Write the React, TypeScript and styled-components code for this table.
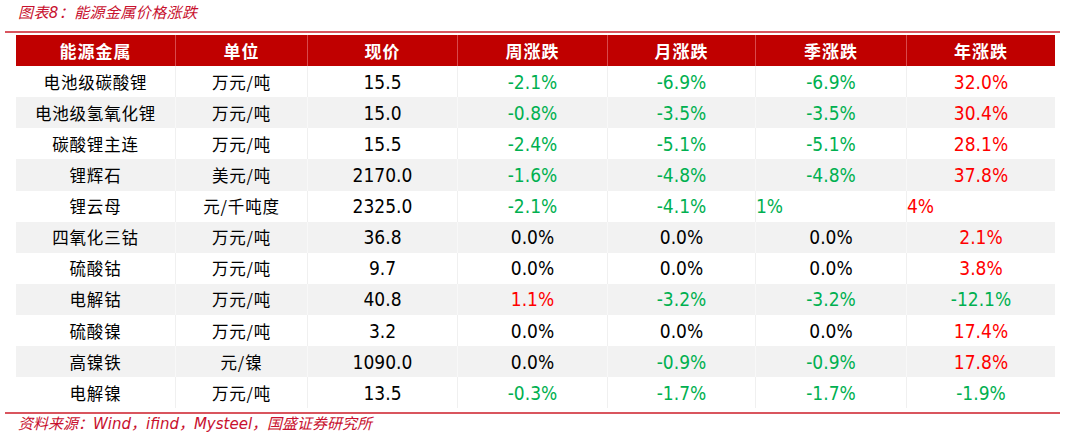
import React from "react";
import styled, { createGlobalStyle } from "styled-components";

const Global = createGlobalStyle`
  html, body { margin: 0; padding: 0; background: #ffffff; }
  body { font-family: "Noto Sans CJK SC", sans-serif; }
`;

const Page = styled.div`
  width: 1065px;
  height: 438px;
  padding: 0 5px;
  box-sizing: border-box;
  background: #fff;
`;

const Title = styled.div`
  height: 31px;
  padding-left: 13px;
  line-height: 27px;
  font-size: 15px;
  font-style: italic;
  color: #c8102e;
  font-family: "DejaVu Sans", "Noto Sans CJK SC", sans-serif;
  letter-spacing: 0.4px;
`;

const Rule = styled.div<{ $gap: number }>`
  height: 2px;
  width: 1055px;
  background: #d9555e;
  margin-bottom: ${(p) => p.$gap}px;
`;

const Table = styled.div`
  margin: 0 0 3.5px 11px;
  width: 1039px;
  display: grid;
  grid-template-columns: 159px 132px 150px 150px 148px 151px 149px;
`;

const HeadCell = styled.div<{ $first?: boolean }>`
  height: 31px;
  background: #c00000;
  color: #ffffff;
  font-weight: 700;
  font-size: 17px;
  display: flex;
  align-items: center;
  justify-content: center;
  box-sizing: border-box;
  border-left: ${(p) => (p.$first ? "none" : "1px solid #d8494c")};
  letter-spacing: 1px;
`;

type Tone = "up" | "down" | "flat";

const Cell = styled.div<{
  $alt: boolean;
  $first?: boolean;
  $tone?: Tone;
  $num?: boolean;
  $left?: boolean;
}>`
  height: 31.13px;
  background: ${(p) => (p.$alt ? "#f2f2f2" : "#ffffff")};
  box-sizing: border-box;
  border-left: ${(p) =>
    p.$first ? "none" : p.$alt ? "1px solid #f8f8f8" : "1px solid #f0f0f0"};
  display: flex;
  align-items: center;
  justify-content: ${(p) => (p.$left ? "flex-start" : "center")};
  color: ${(p) =>
    p.$tone === "up" ? "#ff0000" : p.$tone === "down" ? "#00b050" : "#000000"};
  font-family: ${(p) =>
    p.$num
      ? `"DejaVu Sans Condensed", "DejaVu Sans", sans-serif`
      : `"Noto Sans CJK SC", sans-serif`};
  font-stretch: ${(p) => (p.$num ? "condensed" : "normal")};
  font-size: ${(p) => (p.$num ? "19px" : "16.5px")};
  white-space: nowrap;
  overflow: hidden;
  letter-spacing: ${(p) => (p.$num ? "0" : "0.8px")};
`;

const Source = styled.div`
  height: 20px;
  line-height: 20px;
  padding-left: 13px;
  font-size: 15px;
  font-style: italic;
  color: #c8102e;
  font-family: "DejaVu Sans", "Noto Sans CJK SC", sans-serif;
`;

type Row = {
  name: string;
  unit: string;
  price: string;
  vals: string[];
  tones?: Tone[];
  left?: boolean[];
};

const rows: Row[] = [
  { name: "电池级碳酸锂", unit: "万元/吨", price: "15.5", vals: ["-2.1%", "-6.9%", "-6.9%", "32.0%"] },
  { name: "电池级氢氧化锂", unit: "万元/吨", price: "15.0", vals: ["-0.8%", "-3.5%", "-3.5%", "30.4%"] },
  { name: "碳酸锂主连", unit: "万元/吨", price: "15.5", vals: ["-2.4%", "-5.1%", "-5.1%", "28.1%"] },
  { name: "锂辉石", unit: "美元/吨", price: "2170.0", vals: ["-1.6%", "-4.8%", "-4.8%", "37.8%"] },
  {
    name: "锂云母",
    unit: "元/千吨度",
    price: "2325.0",
    vals: ["-2.1%", "-4.1%", "1%", "4%"],
    tones: ["down", "down", "down", "up"],
    left: [false, false, true, true],
  },
  { name: "四氧化三钴", unit: "万元/吨", price: "36.8", vals: ["0.0%", "0.0%", "0.0%", "2.1%"] },
  { name: "硫酸钴", unit: "万元/吨", price: "9.7", vals: ["0.0%", "0.0%", "0.0%", "3.8%"] },
  { name: "电解钴", unit: "万元/吨", price: "40.8", vals: ["1.1%", "-3.2%", "-3.2%", "-12.1%"] },
  { name: "硫酸镍", unit: "万元/吨", price: "3.2", vals: ["0.0%", "0.0%", "0.0%", "17.4%"] },
  { name: "高镍铁", unit: "元/镍", price: "1090.0", vals: ["0.0%", "-0.9%", "-0.9%", "17.8%"] },
  { name: "电解镍", unit: "万元/吨", price: "13.5", vals: ["-0.3%", "-1.7%", "-1.7%", "-1.9%"] },
];

const headers = ["能源金属", "单位", "现价", "周涨跌", "月涨跌", "季涨跌", "年涨跌"];

const toneOf = (v: string): Tone => {
  if (v.startsWith("-")) return "down";
  if (/^0\.0+%$/.test(v)) return "flat";
  return "up";
};

export default function App() {
  return (
    <>
      <Global />
      <Page>
        <Title>图表8：能源金属价格涨跌</Title>
        <Rule $gap={2} />
        <Table>
          {headers.map((h, i) => (
            <HeadCell key={h} $first={i === 0}>
              {h}
            </HeadCell>
          ))}
          {rows.map((r, ri) => {
            const alt = ri % 2 === 1;
            return (
              <React.Fragment key={r.name}>
                <Cell $alt={alt} $first>
                  {r.name}
                </Cell>
                <Cell $alt={alt}>{r.unit}</Cell>
                <Cell $alt={alt} $num>
                  {r.price}
                </Cell>
                {r.vals.map((v, vi) => (
                  <Cell
                    key={vi}
                    $alt={alt}
                    $num
                    $tone={r.tones?.[vi] ?? toneOf(v)}
                    $left={r.left?.[vi]}
                  >
                    {v}
                  </Cell>
                ))}
              </React.Fragment>
            );
          })}
        </Table>
        <Rule $gap={0} />
        <Source>资料来源：Wind，ifind，Mysteel，国盛证券研究所</Source>
      </Page>
    </>
  );
}
